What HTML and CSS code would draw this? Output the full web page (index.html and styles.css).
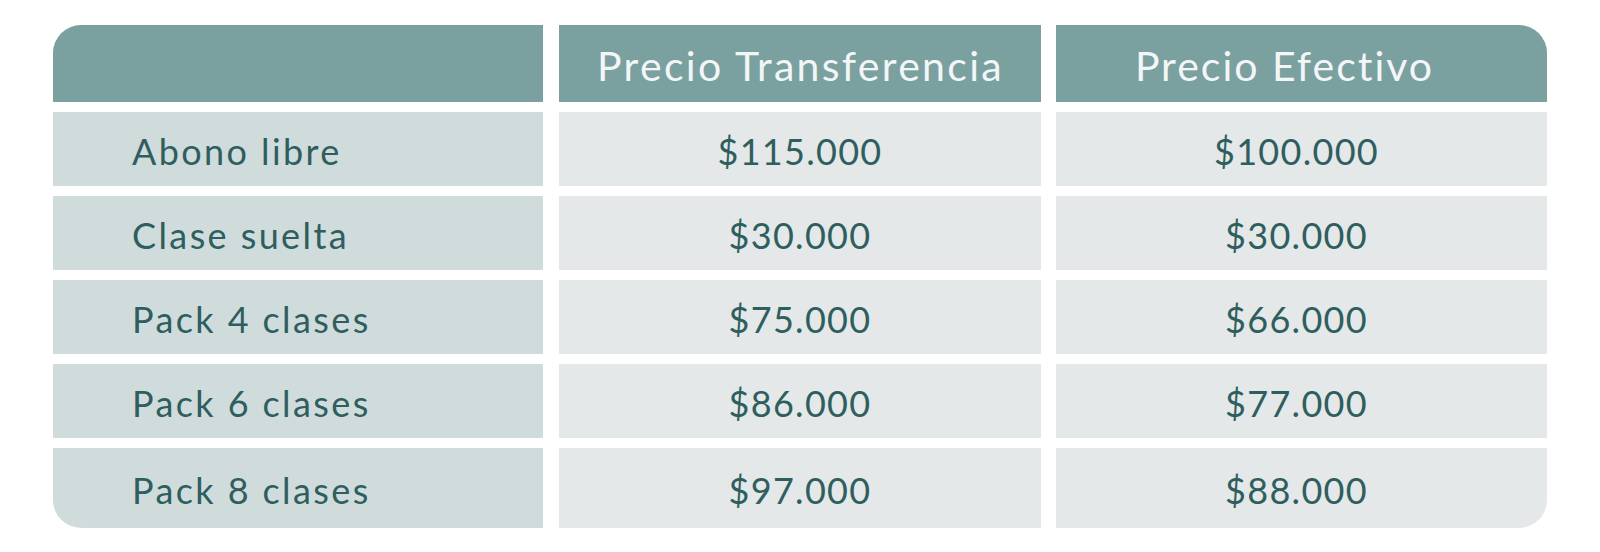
FILE: index.html
```html
<!DOCTYPE html>
<html lang="es">
<head>
<meta charset="utf-8">
<title>Precios</title>
<link rel="stylesheet" href="styles.css">
</head>
<body>
<div class="table">
  <div class="cell head"></div>
  <div class="cell head">Precio Transferencia</div>
  <div class="cell head head-last">Precio Efectivo</div>

  <div class="cell name">Abono libre</div>
  <div class="cell price">$115.000</div>
  <div class="cell price cash">$100.000</div>

  <div class="cell name">Clase suelta</div>
  <div class="cell price">$30.000</div>
  <div class="cell price cash">$30.000</div>

  <div class="cell name">Pack 4 clases</div>
  <div class="cell price">$75.000</div>
  <div class="cell price cash">$66.000</div>

  <div class="cell name">Pack 6 clases</div>
  <div class="cell price">$86.000</div>
  <div class="cell price cash">$77.000</div>

  <div class="cell name">Pack 8 clases</div>
  <div class="cell price">$97.000</div>
  <div class="cell price cash">$88.000</div>
</div>
</body>
</html>
```
FILE: styles.css
```css
html, body {
  margin: 0;
  padding: 0;
  background: #ffffff;
}
body {
  padding: 25px 0 0 53px;
  font-family: "Lato", "Liberation Sans", sans-serif;
}
.table {
  display: grid;
  grid-template-columns: 490px 482px 491px;
  grid-template-rows: 77px 74px 74px 74px 74px 80px;
  column-gap: 15.5px;
  row-gap: 10px;
  width: 1494px;
  border-radius: 28px;
  overflow: hidden;
}
.cell {
  display: flex;
  align-items: center;
  font-size: 36px;
  color: #2f5e5f;
  padding-top: 3px;
}
.head {
  background: #7ba0a0;
  color: #f2f6f6;
  justify-content: center;
  font-size: 41px;
  letter-spacing: 2.3px;
  padding-left: 2px;
}
.head-last {
  letter-spacing: 2px;
  padding-left: 0;
  padding-right: 34px;
}
.name {
  background: #d0dcdc;
  padding-left: 79px;
  letter-spacing: 2.4px;
}
.price {
  background: #e4e8e8;
  justify-content: center;
  letter-spacing: 1.3px;
  padding-left: 1px;
}
.cash {
  padding-left: 0;
  padding-right: 10px;
}
```
